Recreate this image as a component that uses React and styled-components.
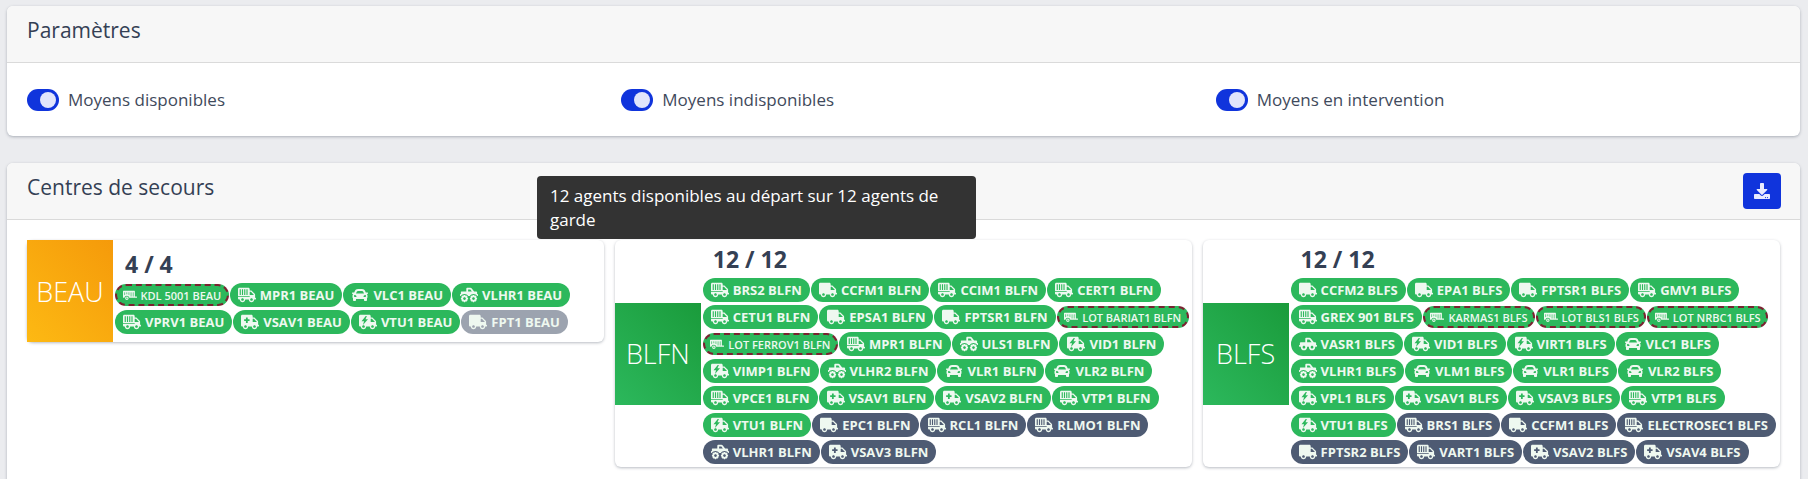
import React from 'react';
import styled, { createGlobalStyle } from 'styled-components';
import { FaAmbulance, FaCar, FaTrailer, FaTruck, FaTruckMonster, FaTruckPickup, FaDownload } from 'react-icons/fa';

const GlobalStyle = createGlobalStyle`
  html, body {
    margin: 0;
    height: 100%;
    overflow: hidden;
    background: #ebecef;
    font-family: "Open Sans", "Noto Sans", sans-serif;
    color: #3a4557;
  }
`;

const Page = styled.div`
  position: relative;
  display: flex;
  flex-direction: column;
  gap: 27px;
  padding: 6px 8px 0 7px;
`;

const Card = styled.section`
  background: #fff;
  border-radius: 6px;
  box-shadow: 0 1px 3px rgba(50, 60, 80, 0.35);
`;

const CardHeader = styled.header`
  display: flex;
  justify-content: space-between;
  align-items: center;
  height: 56px;
  padding: 0 19px 0 20px;
  background: #f7f7f7;
  border-bottom: 1px solid #dadada;
  border-radius: 6px 6px 0 0;
`;

const CardTitle = styled.h2`
  margin: 0 0 8px;
  font-size: 21px;
  font-weight: 500;
  color: #344054;
`;

const SettingsRow = styled.div`
  display: grid;
  grid-template-columns: repeat(3, 1fr);
  column-gap: 30px;
  align-items: center;
  height: 73px;
  padding: 0 20px;
`;

const Setting = styled.label`
  display: flex;
  align-items: center;
  gap: 9px;
  font-size: 17px;
  color: #3f4a5c;
`;

const Toggle = styled.span`
  display: flex;
  align-items: center;
  justify-content: flex-end;
  width: 32px;
  height: 22px;
  padding-right: 3px;
  box-sizing: border-box;
  border-radius: 11px;
  background: #1034dc;

  &::after {
    content: '';
    width: 16px;
    height: 16px;
    border-radius: 50%;
    background: #e2e5fb;
  }
`;

const DownloadButton = styled.button`
  display: flex;
  align-items: center;
  justify-content: center;
  width: 38px;
  height: 36px;
  padding: 0;
  border: none;
  border-radius: 4px;
  background: #1034dc;
  color: #e8ecff;
  font-size: 16px;
`;

const CentreGrid = styled.div`
  display: grid;
  grid-template-columns: repeat(3, 1fr);
  column-gap: 10.4px;
  align-items: start;
  padding: 20px 20px 20px;
`;

const CentreCard = styled.article`
  display: flex;
  align-items: center;
  min-height: 102px;
  background: #fff;
  border-radius: 6px;
  box-shadow: 0 1px 3px rgba(50, 60, 80, 0.35);
`;

const CentreLabel = styled.div`
  flex: 0 0 86px;
  display: flex;
  align-items: center;
  justify-content: center;
  height: 102px;
  color: #fff;
  font-size: 27px;
  font-weight: 300;
  background: ${(p) =>
    p.$tone === 'orange'
      ? 'linear-gradient(45deg, #fdb913, #f59a0a)'
      : 'linear-gradient(45deg, #2cb85c, #1a9b3b)'};
`;

const CentreBody = styled.div`
  flex: 1;
  min-width: 0;
  padding-left: 2px;
`;

const Count = styled.div`
  height: 38px;
  padding-left: 10px;
  font-size: 23px;
  font-weight: 700;
  line-height: 38px;
  color: #344054;
`;

const ChipList = styled.div`
  display: flex;
  flex-wrap: wrap;
  column-gap: 1px;
`;

const chipColors = { ok: '#2cb85c', off: '#4e5b73', idle: '#9ca3af' };

const Chip = styled.span`
  display: inline-flex;
  align-items: center;
  gap: 4px;
  height: 24px;
  margin-bottom: 3px;
  padding: 0 8px;
  box-sizing: border-box;
  border-radius: 12px;
  background: ${(p) => chipColors[p.$state]};
  color: #eef8f0;
  font-size: 13px;
  font-weight: 700;
  white-space: nowrap;

  svg {
    flex: none;
    width: 18px;
    height: 16px;
  }
`;

const DashedChip = styled(Chip)`
  height: 22px;
  margin: 1px 0 4px;
  padding: 0 5.5px;
  border: 2px dashed #7a2230;
  font-size: 11px;
  font-weight: 600;

  svg {
    width: 14px;
    height: 12px;
  }
`;

const Tooltip = styled.div`
  position: absolute;
  left: 537px;
  top: 176px;
  box-sizing: border-box;
  width: 439px;
  height: 63px;
  padding: 8px 13px;
  border-radius: 4px;
  background: #333;
  color: #fff;
  font-size: 17px;
  line-height: 24px;
`;

const truckPath =
  'M624 352h-16V243.9c0-12.7-5.1-24.9-14.1-33.9L494 110.1c-9-9-21.2-14.1-33.9-14.1H416V48c0-26.5-21.5-48-48-48H48C21.5 0 0 21.5 0 48v320c0 26.5 21.5 48 48 48h16c0 53 43 96 96 96s96-43 96-96h128c0 53 43 96 96 96s96-43 96-96h48c8.8 0 16-7.2 16-16v-32c0-8.8-7.2-16-16-16zM160 464c-26.5 0-48-21.5-48-48s21.5-48 48-48 48 21.5 48 48-21.5 48-48 48zm320 0c-26.5 0-48-21.5-48-48s21.5-48 48-48 48 21.5 48 48-21.5 48-48 48zm80-208H416V144h44.1l99.9 99.9V256z';

// slatted container truck, the FA one has no such glyph
const ContainerIcon = () => (
  <svg viewBox="0 0 640 512" fill="currentColor" fillRule="evenodd">
    <path d={truckPath + 'M60 50h40v210h-40zM140 50h40v210h-40zM220 50h40v210h-40zM300 50h40v210h-40zM0 290h416v30H0z'} />
  </svg>
);

// truck with a lightning bolt cut out of the box
const BoltIcon = () => (
  <svg viewBox="0 0 640 512" fill="currentColor" fillRule="evenodd">
    <path d={truckPath + 'M240 40L90 230h90l-40 130L320 160h-90l50-120z'} />
  </svg>
);

const icons = {
  truck: FaTruck,
  box: ContainerIcon,
  car: FaCar,
  monster: FaTruckMonster,
  amb: FaAmbulance,
  bolt: BoltIcon,
  lot: FaTrailer,
  pick: FaTruckPickup,
};

const centres = [
  {
    name: 'BEAU', tone: 'orange', count: '4 / 4',
    chips: [
      ['lot', 'KDL 5001 BEAU', 'ok', 1], ['box', 'MPR1 BEAU', 'ok'], ['car', 'VLC1 BEAU', 'ok'], ['monster', 'VLHR1 BEAU', 'ok'],
      ['box', 'VPRV1 BEAU', 'ok'], ['amb', 'VSAV1 BEAU', 'ok'], ['bolt', 'VTU1 BEAU', 'ok'], ['truck', 'FPT1 BEAU', 'idle'],
    ],
  },
  {
    name: 'BLFN', tone: 'green', count: '12 / 12',
    chips: [
      ['box', 'BRS2 BLFN', 'ok'], ['truck', 'CCFM1 BLFN', 'ok'], ['box', 'CCIM1 BLFN', 'ok'], ['box', 'CERT1 BLFN', 'ok'],
      ['box', 'CETU1 BLFN', 'ok'], ['truck', 'EPSA1 BLFN', 'ok'], ['truck', 'FPTSR1 BLFN', 'ok'], ['lot', 'LOT BARIAT1 BLFN', 'ok', 1],
      ['lot', 'LOT FERROV1 BLFN', 'ok', 1], ['box', 'MPR1 BLFN', 'ok'], ['monster', 'ULS1 BLFN', 'ok'], ['bolt', 'VID1 BLFN', 'ok'],
      ['bolt', 'VIMP1 BLFN', 'ok'], ['monster', 'VLHR2 BLFN', 'ok'], ['car', 'VLR1 BLFN', 'ok'], ['car', 'VLR2 BLFN', 'ok'],
      ['box', 'VPCE1 BLFN', 'ok'], ['amb', 'VSAV1 BLFN', 'ok'], ['amb', 'VSAV2 BLFN', 'ok'], ['box', 'VTP1 BLFN', 'ok'],
      ['bolt', 'VTU1 BLFN', 'ok'], ['truck', 'EPC1 BLFN', 'off'], ['box', 'RCL1 BLFN', 'off'], ['box', 'RLMO1 BLFN', 'off'],
      ['monster', 'VLHR1 BLFN', 'off'], ['amb', 'VSAV3 BLFN', 'off'],
    ],
  },
  {
    name: 'BLFS', tone: 'green', count: '12 / 12',
    chips: [
      ['truck', 'CCFM2 BLFS', 'ok'], ['truck', 'EPA1 BLFS', 'ok'], ['truck', 'FPTSR1 BLFS', 'ok'], ['box', 'GMV1 BLFS', 'ok'],
      ['box', 'GREX 901 BLFS', 'ok'], ['lot', 'KARMAS1 BLFS', 'ok', 1], ['lot', 'LOT BLS1 BLFS', 'ok', 1], ['lot', 'LOT NRBC1 BLFS', 'ok', 1],
      ['pick', 'VASR1 BLFS', 'ok'], ['bolt', 'VID1 BLFS', 'ok'], ['bolt', 'VIRT1 BLFS', 'ok'], ['car', 'VLC1 BLFS', 'ok'],
      ['monster', 'VLHR1 BLFS', 'ok'], ['car', 'VLM1 BLFS', 'ok'], ['car', 'VLR1 BLFS', 'ok'], ['car', 'VLR2 BLFS', 'ok'],
      ['bolt', 'VPL1 BLFS', 'ok'], ['amb', 'VSAV1 BLFS', 'ok'], ['amb', 'VSAV3 BLFS', 'ok'], ['box', 'VTP1 BLFS', 'ok'],
      ['bolt', 'VTU1 BLFS', 'ok'], ['box', 'BRS1 BLFS', 'off'], ['truck', 'CCFM1 BLFS', 'off'], ['box', 'ELECTROSEC1 BLFS', 'off'],
      ['truck', 'FPTSR2 BLFS', 'off'], ['box', 'VART1 BLFS', 'off'], ['amb', 'VSAV2 BLFS', 'off'], ['amb', 'VSAV4 BLFS', 'off'],
    ],
  },
];

const settings = ['Moyens disponibles', 'Moyens indisponibles', 'Moyens en intervention'];

const App = () => (
  <>
    <GlobalStyle />
    <Page>
      <Card>
        <CardHeader>
          <CardTitle>Paramètres</CardTitle>
        </CardHeader>
        <SettingsRow>
          {settings.map((label) => (
            <Setting key={label}>
              <Toggle />
              {label}
            </Setting>
          ))}
        </SettingsRow>
      </Card>
      <Card>
        <CardHeader>
          <CardTitle>Centres de secours</CardTitle>
          <DownloadButton aria-label="Télécharger">
            <FaDownload />
          </DownloadButton>
        </CardHeader>
        <CentreGrid>
          {centres.map((centre) => (
            <CentreCard key={centre.name}>
              <CentreLabel $tone={centre.tone}>{centre.name}</CentreLabel>
              <CentreBody>
                <Count>{centre.count}</Count>
                <ChipList>
                  {centre.chips.map(([icon, label, state, dashed]) => {
                    const Icon = icons[icon];
                    const Tag = dashed ? DashedChip : Chip;
                    return (
                      <Tag key={label} $state={state}>
                        <Icon />
                        {label}
                      </Tag>
                    );
                  })}
                </ChipList>
              </CentreBody>
            </CentreCard>
          ))}
        </CentreGrid>
      </Card>
      <Tooltip>12 agents disponibles au départ sur 12 agents de garde</Tooltip>
    </Page>
  </>
);

export default App;
